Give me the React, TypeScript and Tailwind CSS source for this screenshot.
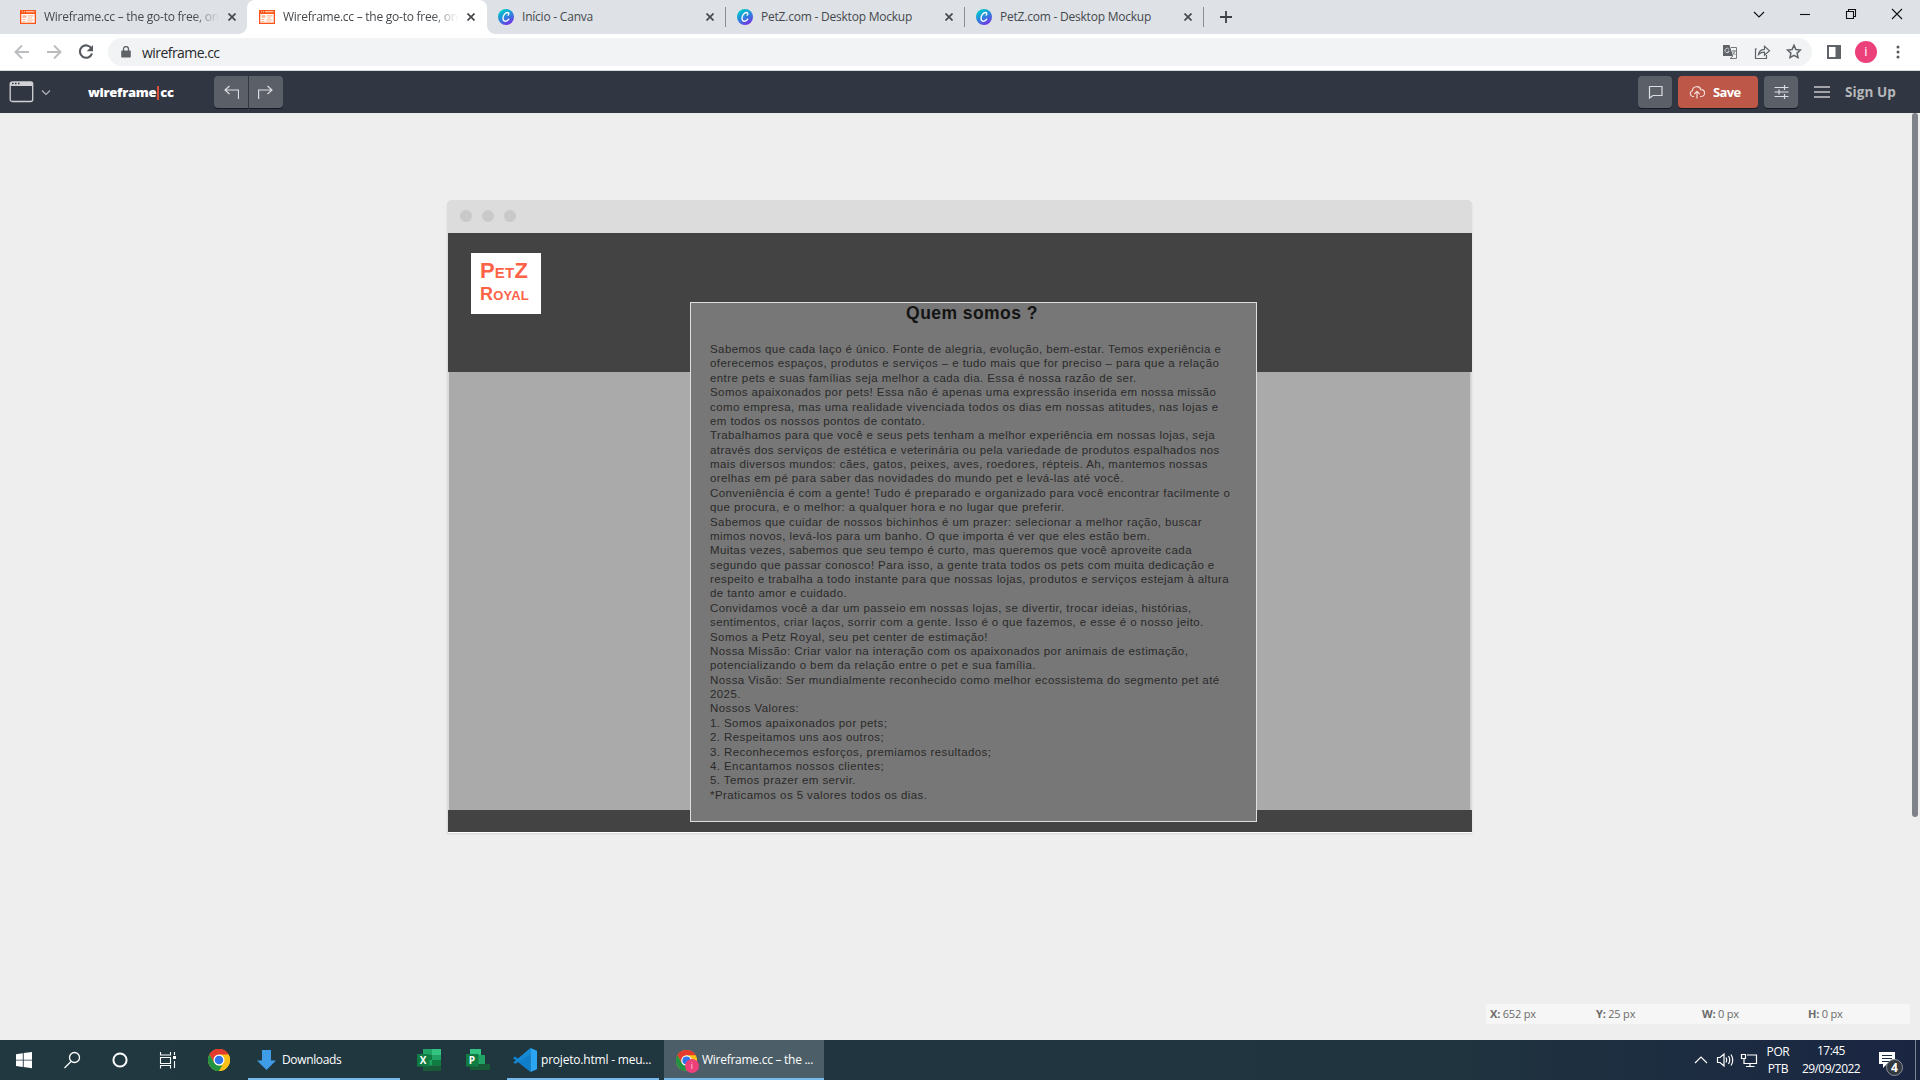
import React from "react";

const ui = "font-['Open_Sans','Noto_Sans',sans-serif]";

const X = ({ className = "" }: { className?: string }) => (
  <svg width="8" height="8" viewBox="0 0 8 8" className={className} fill="none" stroke="#45494d" strokeWidth="1.7">
    <path d="M.5 .5l7 7M7.5 .5l-7 7" />
  </svg>
);

const WireIcon = () => (
  <svg width="16" height="14" viewBox="0 0 16 14" className="shrink-0">
    <path d="M0 0h16v14H0z" fill="#fa5416" />
    <path d="M1.300 4h13.400v8.700H1.300z" fill="#fff" />
    <path d="M2 1.300h1v1H2zM4 1.300h1v1H4zM6 1.300h8.500v1H6z" fill="#ffe0d0" />
    <path d="M2.500 5.300h4v2.400h-4zM8 5.300h5.500v1.200H8zM8 7.500h4v1H8zM2.500 9h3v1h-3zM7 9.500h6.500v1H7zM2.500 11h3v1h-3zM7 11.400h5v.8H7z" fill="#fdb594" />
  </svg>
);

const CanvaIcon = () => (
  <svg width="16" height="16" viewBox="0 0 16 16" className="shrink-0">
    <defs>
      <linearGradient id="cv" x1="0.2" y1="0" x2="0.75" y2="1">
        <stop offset="0.1" stopColor="#00c4cc" />
        <stop offset="0.5" stopColor="#2b86dd" />
        <stop offset="1" stopColor="#7d2ae8" />
      </linearGradient>
    </defs>
    <circle cx="8" cy="8" r="8" fill="url(#cv)" />
    <path d="M10.100 6.200c1-.7 1.200-2.700-.5-2.700C7.200 3.500 5 6.500 5 9.300c0 3.800 3.800 3.800 5.800.9" fill="none" stroke="#fff" strokeWidth="1.300" strokeLinecap="round" />
  </svg>
);

const Chrome = ({ size }: { size: number }) => (
  <svg width={size} height={size} viewBox="0 0 22 22">
    <circle cx="11" cy="11" r="11" fill="#fbc116" />
    <path d="M11 11L1.470 5.500A11 11 0 0 1 20.530 5.500z" fill="#e33b2e" />
    <path d="M11 5.500h9.530A11 11 0 0 0 1.470 5.500L6.200 13.700z" fill="#e33b2e" />
    <path d="M1.470 5.500L6.240 13.750 11 16.500h4.760L11 22A11 11 0 0 1 1.470 5.500z" fill="#229342" />
    <path d="M15.760 13.750L11 22A11 11 0 0 0 20.530 5.500H11z" fill="#fbc116" />
    <circle cx="11" cy="11" r="5.500" fill="#fff" />
    <circle cx="11" cy="11" r="4.300" fill="#2f74e8" />
  </svg>
);

type TabProps = { title: string; canva?: boolean; active?: boolean };
const Tab = ({ title, canva, active }: TabProps) => (
  <div
    className={
      active
        ? "relative z-10 flex h-[34px] w-60 items-center rounded-t-lg bg-white pr-3 pl-3"
        : canva
          ? "relative flex h-[34px] w-[239px] items-center pr-3 pl-[11px]"
          : "relative flex h-[34px] w-[239px] items-center pr-[11px] pl-3"
    }
  >
    {active && (
      <>
        <span className="absolute bottom-0 -left-2 size-2 bg-[radial-gradient(circle_at_0_0,transparent_7.500px,white_8px)]" />
        <span className="absolute -right-2 bottom-0 size-2 bg-[radial-gradient(circle_at_100%_0,transparent_7.500px,white_8px)]" />
      </>
    )}
    {canva ? <CanvaIcon /> : <WireIcon />}
    <span
      className={
        canva
          ? "ml-2 flex-1 overflow-hidden text-[12px] tracking-[-0.22px] whitespace-nowrap text-[#45494d]"
          : "ml-2 w-[175px] overflow-hidden mask-r-from-85% text-[12px] tracking-[-0.25px] whitespace-nowrap text-[#45494d]"
      }
    >
      {title}
    </span>
    <X className="ml-auto shrink-0" />
    {canva && <span className="absolute top-[7px] right-0 h-5 w-px bg-[#8a8d91]" />}
  </div>
);

const lines = [
  "Sabemos que cada laço é único. Fonte de alegria, evolução, bem-estar. Temos experiência e",
  "oferecemos espaços, produtos e serviços – e tudo mais que for preciso – para que a relação",
  "entre pets e suas famílias seja melhor a cada dia. Essa é nossa razão de ser.",
  "Somos apaixonados por pets! Essa não é apenas uma expressão inserida em nossa missão",
  "como empresa, mas uma realidade vivenciada todos os dias em nossas atitudes, nas lojas e",
  "em todos os nossos pontos de contato.",
  "Trabalhamos para que você e seus pets tenham a melhor experiência em nossas lojas, seja",
  "através dos serviços de estética e veterinária ou pela variedade de produtos espalhados nos",
  "mais diversos mundos: cães, gatos, peixes, aves, roedores, répteis. Ah, mantemos nossas",
  "orelhas em pé para saber das novidades do mundo pet e levá-las até você.",
  "Conveniência é com a gente! Tudo é preparado e organizado para você encontrar facilmente o",
  "que procura, e o melhor: a qualquer hora e no lugar que preferir.",
  "Sabemos que cuidar de nossos bichinhos é um prazer: selecionar a melhor ração, buscar",
  "mimos novos, levá-los para um banho. O que importa é ver que eles estão bem.",
  "Muitas vezes, sabemos que seu tempo é curto, mas queremos que você aproveite cada",
  "segundo que passar conosco! Para isso, a gente trata todos os pets com muita dedicação e",
  "respeito e trabalha a todo instante para que nossas lojas, produtos e serviços estejam à altura",
  "de tanto amor e cuidado.",
  "Convidamos você a dar um passeio em nossas lojas, se divertir, trocar ideias, histórias,",
  "sentimentos, criar laços, sorrir com a gente. Isso é o que fazemos, e esse é o nosso jeito.",
  "Somos a Petz Royal, seu pet center de estimação!",
  "Nossa Missão: Criar valor na interação com os apaixonados por animais de estimação,",
  "potencializando o bem da relação entre o pet e sua família.",
  "Nossa Visão: Ser mundialmente reconhecido como melhor ecossistema do segmento pet até",
  "2025.",
  "Nossos Valores:",
  "1. Somos apaixonados por pets;",
  "2. Respeitamos uns aos outros;",
  "3. Reconhecemos esforços, premiamos resultados;",
  "4. Encantamos nossos clientes;",
  "5. Temos prazer em servir.",
  "*Praticamos os 5 valores todos os dias.",
];

const TabStrip = () => (
  <div className="flex h-[34px] bg-[#dee1e6] pl-2">
    <Tab title="Wireframe.cc – the go-to free, online" />
    <Tab title="Wireframe.cc – the go-to free, online" active />
    <Tab title="Início - Canva" canva />
    <Tab title="PetZ.com - Desktop Mockup" canva />
    <Tab title="PetZ.com - Desktop Mockup" canva />
    <svg width="12" height="34" viewBox="0 0 12 34" className="ml-4" stroke="#3c4043" strokeWidth="1.800">
      <path d="M0 17h12M6 11v12" />
    </svg>
    <svg width="150" height="34" viewBox="0 0 150 34" className="mr-[17px] ml-auto" fill="none" stroke="#111" strokeWidth="1.100">
      <path d="M1 12l5 5 5-5" />
      <path d="M47 14.500h10" />
      <path d="M93.500 11.500h7v7h-7zM95.500 11.500v-2h7v7h-2" />
      <path d="M139 9l10 10M149 9l-10 10" />
    </svg>
  </div>
);

const AddressBar = () => (
  <div className="flex h-[37px] items-center border-b border-[#d5d8dc] bg-white">
    <svg width="108" height="36" viewBox="0 0 108 36" fill="none" strokeWidth="1.900">
      <path d="M29 18H16M22 11.500L15.500 18l6.500 6.500" stroke="#babcbe" />
      <path d="M47 18h13M54 11.500l6.500 6.500-6.500 6.500" stroke="#babcbe" />
      <path d="M91.500 14.500A6.200 6.200 0 1 0 92 19.500" stroke="#55595e" strokeWidth="2.100" />
      <path d="M93 11v6.300h-6.300z" fill="#55595e" />
    </svg>
    <div className="flex h-7 w-[1704px] items-center rounded-full bg-[#f1f3f4] pl-[13px]">
      <svg width="10" height="12" viewBox="0 0 10 12">
        <path d="M1 4.500h8a.8.8 0 0 1 .8.800v5.400a.8.8 0 0 1-.8.800H1a.8.8 0 0 1-.8-.8V5.300a.8.8 0 0 1 .8-.8z" fill="#5f6368" />
        <path d="M2.500 5V3a2.500 2.500 0 0 1 5 0v2" fill="none" stroke="#5f6368" strokeWidth="1.300" />
      </svg>
      <span className="ml-[11px] text-[14px] tracking-[-0.55px] text-[#27292c]">wireframe.cc</span>
      <svg width="80" height="18" viewBox="0 0 80 18" className="mr-[10px] ml-auto" fill="none">
        <path d="M1 2h6.500l3.500 11H1z" fill="#5f6368" />
        <path d="M9 4.500h5.500v11H8l3-2.500" stroke="#74777b" />
        <path d="M7 6.300A2.200 2.200 0 1 0 7.300 8.200H5.500" stroke="#d9dbdd" strokeWidth=".9" />
        <path d="M10 8h4M12 7v1M13.200 8l-2.700 4M11 9.500l2.500 2.500" stroke="#74777b" strokeWidth=".9" />
        <path d="M35 6H33.500v9.500h11V12M36.500 11.500C37 8 39.500 6.500 42.500 6.300V3.300l5 4.400-5 4.400V9.200C40 9.200 38 10 36.500 11.500z" stroke="#5f6368" strokeWidth="1.200" />
        <path d="M72 2.300l1.900 4.200 4.500.5-3.300 3.100.9 4.500-4-2.300-4 2.300.9-4.500-3.300-3.100 4.500-.5z" stroke="#5f6368" strokeWidth="1.500" />
      </svg>
    </div>
    <svg width="14" height="14" viewBox="0 0 14 14" className="ml-[15px]">
      <path d="M1 1h12v12H1z" fill="none" stroke="#5f6368" strokeWidth="2" />
      <path d="M8.500 1H13v12H8.500z" fill="#5f6368" />
    </svg>
    <span className="ml-[14px] flex size-[22px] items-center justify-center rounded-full bg-[#ec407a] pb-px text-[13px] text-white">i</span>
    <svg width="4" height="14" viewBox="0 0 4 14" className="ml-[19px]" fill="#55595e">
      <circle cx="2" cy="2" r="1.500" />
      <circle cx="2" cy="7" r="1.500" />
      <circle cx="2" cy="12" r="1.500" />
    </svg>
  </div>
);

const btn = "flex h-8 items-center justify-center bg-[#5b5f68] shadow-[0_1px_0_#17191e]";

const AppBar = () => (
  <div className="flex h-[42px] items-center bg-[#303642] pl-[9px]">
    <svg width="42" height="22" viewBox="0 0 42 22" fill="none">
      <rect x="1.200" y="1" width="22.500" height="19.500" rx="2" stroke="#d0d1d4" strokeWidth="1.300" />
      <path d="M1 1h22.500v4H1z" fill="#d0d1d4" />
      <path d="M3 2.500h1.500M6 2.500h1.500M9 2.500h1.500" stroke="#303642" strokeWidth="1.300" />
      <path d="M33 9.500l4 4 4-4" stroke="#b4b6ba" strokeWidth="1.200" />
    </svg>
    <div className="ml-[37px] flex w-[126px] items-center pt-px text-[13px] font-extrabold tracking-[-0.28px] text-white">
      wireframe
      <span className="mx-[1px] h-[14px] w-[2px] bg-[#d9513c]" />
      cc
    </div>
    <div className="flex gap-px">
      <div className={`${btn} w-[34px] rounded-l-[4px]`}>
        <svg width="16" height="16" viewBox="0 0 16 16" fill="none" stroke="#dcdde0" strokeWidth="1.200">
          <path d="M15.500 15V6H2M6.500 2l-4.500 4 4.500 4" />
        </svg>
      </div>
      <div className={`${btn} w-[34px] rounded-r-[4px]`}>
        <svg width="16" height="16" viewBox="0 0 16 16" fill="none" stroke="#dcdde0" strokeWidth="1.200">
          <path d="M.6 15V6h13.500M9.500 2l4.500 4-4.500 4" />
        </svg>
      </div>
    </div>
    <div className={`${btn} ml-auto w-[34px] rounded-[4px]`}>
      <svg width="16" height="16" viewBox="0 0 16 16" fill="none" stroke="#dcdde0" strokeWidth="1.200">
        <path d="M2.500 2.500h12.500v9H6l-3.500 2.500z" />
      </svg>
    </div>
    <div className="ml-[6px] flex h-8 w-20 items-center rounded-[4px] bg-[#bd5849] pl-[11px] shadow-[0_1px_0_#17191e]">
      <svg width="16" height="14" viewBox="0 0 16 14" fill="none" stroke="#f3dcd8" strokeWidth="1.200">
        <path d="M5 11.500H3.800A3 3 0 0 1 3.300 5.700 4.500 4.500 0 0 1 12 4.700a3.400 3.400 0 0 1 .3 6.800H11M8 13.500V6.500M5.300 9L8 6.300 10.700 9" />
      </svg>
      <span className="ml-2 pt-px text-[13px] font-bold tracking-[-0.6px] text-white">Save</span>
    </div>
    <div className={`${btn} ml-[6px] w-[34px] rounded-[4px]`}>
      <svg width="16" height="16" viewBox="0 0 16 16" fill="none" stroke="#dcdde0" strokeWidth="1.200">
        <path d="M1.500 3.500h14M1.500 8h14M1.500 12.500h14M11.500 1v5M6 5.500v5M11.500 10v5" />
      </svg>
    </div>
    <svg width="16" height="12" viewBox="0 0 16 12" className="ml-4" stroke="#c6c8cb" strokeWidth="1.600">
      <path d="M0 1h16M0 6h16M0 11h16" />
    </svg>
    <span className="ml-[15px] w-[75px] pt-px text-[13.500px] font-bold tracking-[0.1px] whitespace-nowrap text-[#b5b7bb]">Sign Up</span>
  </div>
);

const Mockup = () => (
  <div className="relative ml-[447px] w-[1025px] rounded-t-[5px] bg-[#dcdcdc] shadow-[0_1px_2px_#d4d4d4]">
    <div className="flex h-[33px] items-center gap-[10px] pb-px pl-[13px]">
      <span className="size-3 rounded-full bg-[#c9c9c9]" />
      <span className="size-3 rounded-full bg-[#c9c9c9]" />
      <span className="size-3 rounded-full bg-[#c9c9c9]" />
    </div>
    <div className="ml-px h-[139px] bg-[#434343] pt-5 pl-[23px]">
      <div className="flex h-[61px] w-[70px] flex-col bg-white pt-[6px] pl-[9px] font-['Liberation_Sans',Arial,sans-serif] font-bold tracking-[0.2px] text-[#ff6347] [font-variant:small-caps]">
        <span className="text-[22px] leading-[24px]">PetZ</span>
        <span className="text-[18px] leading-[22px]">Royal</span>
      </div>
    </div>
    <div className="mr-px ml-[2px] h-[438px] border-r border-[#cfcfcf] bg-[#aaaaaa]" />
    <div className="ml-px h-[22px] bg-[#434343]" />
    <div className="ml-px h-px bg-white" />
    <div className="absolute top-[102px] left-[243px] h-[520px] w-[567px] border border-[#dedede] bg-[#777777] pl-[19px] font-['Liberation_Sans',Arial,sans-serif]">
      <h1 className="-ml-[22px] text-center text-[17.500px] leading-[20px] font-bold tracking-[0.45px] text-[#141414]">Quem somos ?</h1>
      <div className="mt-[19px] text-[11.500px] leading-[14.380px] tracking-[0.41px] whitespace-nowrap text-[#2a2a2a]">
        {lines.map((l) => (
          <p key={l}>{l}</p>
        ))}
      </div>
    </div>
  </div>
);

const Coord = ({ k, v }: { k: string; v: string }) => (
  <span className="w-[106px] shrink-0">
    <b>{k}:</b> {v}
  </span>
);

const Office = ({ letter, excel }: { letter: string; excel?: boolean }) => (
  <div className="relative h-[22px] w-6">
    <svg width="24" height="22" viewBox="0 0 24 22">
      {excel ? (
        <>
          <path d="M6 0h18v22H6z" fill="#21a366" />
          <path d="M15 0h9v6h-9z" fill="#33c481" />
          <path d="M6 6h9v5H6zM15 11h9v5.500h-9z" fill="#107c41" />
          <path d="M6 16.500h18V22H6z" fill="#185c37" />
        </>
      ) : (
        <>
          <path d="M4 0h11v6H4z" fill="#33c481" />
          <path d="M4 6h15v9H4z" fill="#21a366" />
          <path d="M4 15h20v6H4z" fill="#185c37" />
        </>
      )}
      <path d="M0 5h12.500v12.500H0z" fill="#107c41" />
    </svg>
    <span className="absolute top-[5px] left-0 w-[12px] text-center text-[10px] leading-[13px] font-bold text-white">{letter}</span>
  </div>
);

const Taskbar = () => (
  <div className="flex h-10 bg-linear-to-r from-[#213840] via-[#20343f] via-75% to-[#1a2542] text-[12px] text-white">
    <svg width="208" height="40" viewBox="0 0 208 40" fill="none" stroke="#fff">
      <path d="M16 14.200l6.800-.9v6.400H16zM23.700 13.100L32 12v7.700h-8.300zM16 20.600h6.800V27L16 26zM23.700 20.600H32V28.300l-8.300-1.200z" fill="#fff" stroke="none" />
      <circle cx="74.500" cy="17.500" r="5" strokeWidth="1.300" />
      <path d="M71 21.500l-6.500 6.500" strokeWidth="1.300" />
      <circle cx="120" cy="20" r="6.600" strokeWidth="2" />
      <path d="M160.500 12v3h10v-3M160.500 17.500h10v6h-10zM160.500 28.500v-3h10v3M174.500 12v3M174.500 21v7" strokeWidth="1.100" />
      <path d="M173 16h3v3h-3z" fill="#fff" stroke="none" />
    </svg>
    <div className="flex w-10 items-center">
      <Chrome size={22} />
    </div>
    <div className="flex h-10 w-[152px] items-center border-b-2 border-[#76b9ed] pt-[2px] pl-[9px]">
      <svg width="19" height="20" viewBox="0 0 19 20">
        <path d="M5 0h9v10.500h5L9.500 20 0 10.500h5z" fill="#3f9de8" />
      </svg>
      <span className="ml-[6px] tracking-[-0.35px]">Downloads</span>
    </div>
    <div className="ml-[17px] flex w-[90px] items-center gap-[25px]">
      <Office letter="X" excel />
      <Office letter="P" />
    </div>
    <div className="flex h-10 w-[152px] items-center border-b-2 border-[#76b9ed] pt-[2px] pl-[6px]">
      <svg width="24" height="24" viewBox="0 0 24 24">
        <path d="M17.500 0L5.500 11 2.200 8.400.3 9.400v1.200L17.500 24z" fill="#0f7fcb" />
        <path d="M.3 14.500L17.500 0v6.500L2.200 15.800z" fill="#1688d4" />
        <path d="M17.500 0L24 2.800v18.400L17.500 24z" fill="#2ba5f2" />
      </svg>
      <span className="ml-1 tracking-[-0.2px] whitespace-nowrap">projeto.html - meu...</span>
    </div>
    <div className="ml-[5px] flex h-10 w-40 items-center border-b-2 border-[#76b9ed] bg-[#4c5e67] pt-[2px] pl-3">
      <span className="relative">
        <Chrome size={21} />
        <span className="absolute top-[9px] left-[9px] flex size-[14px] items-center justify-center rounded-full bg-[#ec407a] text-[9px] leading-none text-[#ffd5e2]">i</span>
      </span>
      <span className="ml-[5px] tracking-[-0.27px] whitespace-nowrap">Wireframe.cc – the ...</span>
    </div>
    <svg width="68" height="40" viewBox="0 0 68 40" className="ml-auto" fill="none" stroke="#fff" strokeWidth="1.200">
      <path d="M5 23l6-6 6 6" />
      <path d="M27.500 17.500h2.500l4-3.500v12l-4-3.500h-2.500zM36 17.500q1.500 2.500 0 5M38.500 16q2.500 4 0 8M41 14.500q3.500 5.500 0 11" />
      <path d="M57 15h9.500v8.500H54V19M60 23.500v3M56 26.500h8.500M51.500 14.500h4v4h-4z" />
    </svg>
    <div className="ml-px flex w-[38px] flex-col items-center pt-[3px] leading-[17px] tracking-[-0.4px]">
      <span>POR</span>
      <span>PTB</span>
    </div>
    <div className="flex w-[68px] flex-col items-center pt-[2px] leading-[17.500px] tracking-[-0.55px]">
      <span>17:45</span>
      <span>29/09/2022</span>
    </div>
    <div className="relative mr-px ml-[13px] w-9">
      <svg width="18" height="40" viewBox="0 0 18 40">
        <path d="M1 12h16v12H9l-4 4v-4H1z" fill="#fff" />
        <path d="M4 15.500h10M4 18.500h10M4 21.500h7" stroke="#1c2c40" strokeWidth="1.100" />
      </svg>
      <span className="absolute top-[19px] left-[8px] flex size-[17px] items-center justify-center rounded-full border border-[#8b929b] bg-[#333940] text-[12px] leading-none font-bold">4</span>
    </div>
    <div className="mr-1 w-px bg-[#7c8596]" />
  </div>
);

export default function App() {
  return (
    <div className={`flex h-[1080px] w-[1920px] flex-col overflow-hidden bg-[#eeeeee] ${ui}`}>
      <TabStrip />
      <AddressBar />
      <AppBar />
      <main className="relative flex flex-1 flex-col bg-[#eeeeee] pt-[87px]">
        <Mockup />
        <div className="mt-auto mr-[10px] mb-4 ml-auto flex h-5 w-[424px] items-center bg-[#f6f6f6] pl-1 text-[11px] tracking-[-0.2px] text-[#6b6b6b]">
          <Coord k="X" v="652 px" />
          <Coord k="Y" v="25 px" />
          <Coord k="W" v="0 px" />
          <Coord k="H" v="0 px" />
        </div>
        <span className="absolute top-0 right-[2px] h-[704px] w-[6px] rounded-full bg-[#808289]" />
      </main>
      <Taskbar />
    </div>
  );
}
